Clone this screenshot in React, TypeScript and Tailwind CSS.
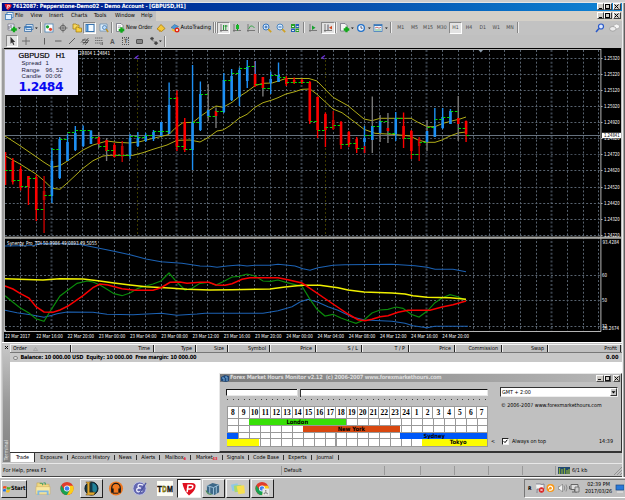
import type { ReactNode } from "react";
import { clsx } from "clsx";

type Kids = { children?: ReactNode };

/* ---------- chart data (chart pixels) ---------- */

type Candle = {
  c: "b" | "r" | "d";
  hi: number;
  lo: number;
  top: number;
  bot: number;
  tick: number;
  grey?: boolean;
};

const k = (c: "b" | "r" | "d", hi: number, lo: number, top: number, bot: number, tick: number, grey = false): Candle => ({
  c, hi, lo, top, bot, tick, grey,
});

const CANDLES: Candle[] = [
  k("r", 152, 185, 152, 185, 170.5),
  k("r", 158, 184.5, 161, 182, 180.5),
  k("r", 166, 190.5, 169, 188, 186.5),
  k("r", 176, 205, 176, 187, 178.5),
  k("r", 175, 221, 177, 210, 209.5),
  k("d", 176, 233, 191, 200, 195.5),
  k("b", 148, 203, 161, 196, 149.5),
  k("b", 137, 179, 139, 178, 139.5),
  k("b", 134, 161, 142, 161, 132.5),
  k("b", 126, 151, 133, 150, 130.5),
  k("b", 125.5, 147, 131, 146, 130.5),
  k("b", 130.5, 144, 130.5, 144, 137.5),
  k("r", 132, 148, 137, 144, 146.5, true),
  k("r", 138, 161, 140, 151, 150.5, true),
  k("r", 143, 157.5, 145, 157, 155.5),
  k("d", 141, 162, 146, 157, 155.5),
  k("b", 134, 159, 138, 155, 136.5),
  k("b", 132, 147, 138, 146, 137.5),
  k("b", 133, 142, 136, 141, 135.5),
  k("b", 130, 141, 132, 139, 131.5),
  k("b", 122, 136, 122, 136, 131.5),
  k("b", 82.5, 134, 105, 134, 98.5),
  k("r", 90.5, 151, 97, 147, 146.5),
  k("r", 118, 152, 122, 150, 149.5),
  k("b", 65, 170, 122, 150, 122.5),
  k("b", 81.5, 131, 94, 130, 94.5),
  k("b", 84, 121, 110, 116, 116.5, true),
  k("r", 107.5, 128, 111, 116, 111.5, true),
  k("b", 73, 113, 80, 112, 80.5),
  k("b", 69, 101, 76, 100, 73.5),
  k("b", 67.5, 106, 70, 97, 68.5),
  k("b", 60, 88, 67, 81, 66.5),
  k("r", 61, 87, 74, 86, 84.5),
  k("r", 77, 96.5, 77, 88, 88.5, true),
  k("b", 71.5, 94, 79, 83, 75.5),
  k("b", 62.5, 82, 75, 82, 77.5),
  k("r", 76, 86, 78, 84, 82.5),
  k("r", 77.5, 84, 80, 83, 82.5),
  k("r", 79, 84, 80, 83, 82.5),
  k("r", 81, 124, 82, 121, 121.5),
  k("r", 96.5, 138, 97, 130, 130.5),
  k("r", 112.5, 147, 114, 130, 127.5),
  k("d", 111, 130, 120, 129, 125.5),
  k("r", 121, 149, 122, 145, 144.5),
  k("r", 131, 147, 132, 145, 143.5),
  k("r", 137, 153, 139, 149, 148.5),
  k("b", 126, 153, 138, 142, 135.5),
  k("b", 96.5, 153, 126, 140, 126.5, true),
  k("b", 115, 142, 121, 133, 121.5, true),
  k("r", 113, 143, 128, 131, 133.5, true),
  k("b", 112, 141, 118, 134, 118.5),
  k("r", 112.5, 148, 126, 139, 138.5),
  k("r", 130, 159, 131, 151, 154.5),
  k("d", 137, 161, 139, 146, 142.5),
  k("b", 120, 151, 131, 142, 127.5, true),
  k("b", 108, 137, 126, 137, 119.5),
  k("b", 108, 129, 117, 128, 117.5),
  k("b", 109, 124, 111, 124, 111.5),
  k("r", 96, 141, 118, 124, 128.5, true),
  k("r", 120.5, 142, 121, 134, 135.5),
];

const BODY = { b: "#1e90f4", r: "#fc0000", d: "#c40000" };

const UPPER_BAND =
  "5,136 20,145.7 36,156.7 44,162.3 52,167.3 60,165.7 68,160.7 83,150 93,145 107,141 117,142.3 130,143 140,141.7 153,138.3 163,136 169,134.5 175,128.3 183,122.7 193,122.3 200,116.7 208,111 216,106 223,107.3 232,102.3 239,96.7 247,91.7 255,85.7 263,83.3 272,83 286,78.5 309,78.5 317,81 333,97.3 348,105.7 364,119 372,120.7 380,118.3 411,118.3 418,122.3 427,126.7 435,126.7 443,123.3 453,120.7 460,119 466,117";
const LOWER_BAND =
  "5,155.7 20,164 36,174 44,180.7 52,188.3 60,189.3 68,182.3 83,168.3 93,160.7 103,156 110,155.3 133,155.3 143,152.7 153,149.3 167,145 177,140.3 190,140 200,142 208,137.7 217,131 223,130 230,125.7 239,118.3 247,114.3 255,107.3 263,102.7 272,100 278,97.7 286,94 295,91.7 302,89.3 310,89 317,94.3 333,109 342,112.7 355,122.3 364,129.3 375,133.3 392,134.3 410,136 418,140 427,142.3 435,142.3 442,140 450,136 458,133 466,132";

const TDI_TOP =
  "5,246 34,245.5 40,243.5 76,244 83,245 98,248 114,251.3 130,254.7 146,259 161,261.7 182,263.3 200,266 210,266.3 217,267.3 227,266 239,265 247,266 255,265.3 270,265.3 278,264.3 288,265.3 295,266 303,268.7 310,270.3 318,267.7 333,265.3 345,264.7 392,264.3 415,265.7 427,267.3 435,269.3 453,269.3 466,271.7";
const TDI_LOW =
  "5,310.3 17,312.7 32,315 44,317.3 52,315.3 57,313.7 67,312 93,312.3 107,314.3 133,314.7 161,313.3 177,315.3 197,314 205,313.3 263,313.3 278,310.7 292,306.7 300,302 308,299.3 318,302.3 328,306.7 338,310.3 352,317 365,320 392,321.3 405,323.3 413,325.7 427,327.7 435,326.3 468,326.3";
const TDI_YELLOW =
  "5,278.7 27,279.5 43,280 60,278.7 83,279 98,280.7 114,283 130,285 146,286.7 169,288 187,289.3 210,290 232,289.7 270,289 285,287 302,285.3 320,285.3 338,287.7 348,290 364,292 392,293 405,294 413,295.7 427,297.3 450,297.7 466,299.3";
const TDI_RED =
  "5,286 13,289 20,293.3 29,298 36,306.7 44,312 53,312.3 60,310 68,306 83,295.7 93,287.7 100,284 108,285 122,288.7 135,290.3 153,290.3 161,287.7 170,282.3 180,282 187,283.3 200,282.3 209,282.3 216,285 225,285.3 232,283.7 242,279.3 250,277.7 278,277.7 288,279.7 302,283 310,288.3 333,304 348,314 358,319.7 365,320.7 372,319.3 380,316.7 388,315.7 398,312.3 408,310.3 430,310.3 442,307 453,304.7 466,301";
const TDI_GREEN =
  "5,295.7 13,302.3 20,307.7 29,313 36,318.7 44,321.3 52,308.3 60,296 68,290 77,283.3 87,281 93,282 100,285 107,289.3 114,293.7 122,295.7 130,293 138,288.3 146,286 153,284 161,281 169,273 177,282.3 185,290 192,288.3 200,283.3 208,282.3 216,285 223,281.7 232,277 239,276.3 247,274 255,276 263,281 271,281.3 278,280 286,282.3 294,284.3 302,286.3 310,299.3 317,309.3 325,316 333,314.3 341,318 349,321 356,323.3 364,320 372,313 380,310 388,309.3 396,307 403,308.3 411,314.3 419,317 427,311.3 435,302.7 442,298 450,294.7 458,296.7 466,300.3";

const PRICES = ["1.25320", "1.25220", "1.25120", "1.25020", "1.24920", "1.24820", "1.24720", "1.24620", "1.24520", "1.24420", "1.24320", "1.24220"];
const DATES = [
  "22 Mar 2017", "22 Mar 16:00", "22 Mar 20:00", "23 Mar 00:00", "23 Mar 04:00", "23 Mar 08:00", "23 Mar 12:00", "23 Mar 16:00",
  "23 Mar 20:00", "24 Mar 00:00", "24 Mar 04:00", "24 Mar 08:00", "24 Mar 12:00", "24 Mar 16:00", "24 Mar 20:00",
];

const colX = (i: number) => Math.floor(20.4 + i * 15.63) + 0.5;
const rowY = (i: number) => Math.floor(58.3 + i * 16.09) + 0.5;
const barX = (i: number) => 5 + i * 7.815;

function Chart() {
  return (
    <svg width="617" height="294" viewBox="4 48 617 294" className="block bg-black" fontFamily="'DejaVu Sans Condensed', 'DejaVu Sans', sans-serif">
      {/* grid */}
      {Array.from({ length: 38 }, (_, i) => {
        const thick = i % 8 === 2;
        return (
          <line key={i} x1={colX(i)} x2={colX(i)} y1="50" y2="331" stroke={thick ? "#39414b" : "#58636f"} strokeWidth={thick ? 2 : 1} strokeDasharray="2 1.9" />
        );
      })}
      {PRICES.map((p, i) => (
        <line key={p} x1="5" x2="600" y1={rowY(i)} y2={rowY(i)} stroke={i === 5 || i === 6 ? "#444d58" : "#58636f"} strokeDasharray="2 1.9" />
      ))}
      {[275.5, 300.5, 326.5].map((y) => (
        <line key={y} x1="5" x2="600" y1={y} y2={y} stroke="#58636f" strokeDasharray="2 1.9" />
      ))}
      {[137.5, 325.5].map((x) => (
        <line key={x} x1={x} x2={x} y1="60" y2="236" stroke="#3d3a00" strokeDasharray="2 2" />
      ))}
      <line x1="5" x2="600" y1="135.5" y2="135.5" stroke="#66727f" />

      {/* main window */}
      <polyline points={UPPER_BAND} fill="none" stroke="#b0ac18" />
      <polyline points={LOWER_BAND} fill="none" stroke="#b0ac18" />
      {CANDLES.map((b, i) => {
        const x = barX(i);
        return (
          <g key={i}>
            <line x1={x} x2={x} y1={b.hi} y2={b.lo} stroke={b.grey ? "#777" : BODY[b.c]} strokeWidth="1.4" />
            <line x1={x} x2={x} y1={b.top} y2={b.bot} stroke={BODY[b.c]} strokeWidth="2.6" />
          </g>
        );
      })}
      <rect x="254.6" y="61" width="1.2" height="13" fill="#1e8fee" />
      <rect x="363.8" y="146" width="1.6" height="7" fill="#f80000" />
      {CANDLES.map((b, i) => (
        <path key={i} d={`M${barX(i) + 0.3} ${b.tick}h2.4M${barX(i) + 4.4} ${b.tick}h${i === 59 ? 0 : 2.6}`} stroke="#00d800" strokeWidth="1.1" />
      ))}
      <path d="M138.5 55.5l-3 2 2.5 1.5M325 55.5l-3 2 2.5 1.5" fill="none" stroke="#6a30d8" strokeWidth="1.1" />
      <path d="M478.500 50h4.500l-2.200 2.500z" fill="#8fa0b0" />

      {/* indicator window */}
      <polyline points={TDI_TOP} fill="none" stroke="#1c62b4" strokeWidth="1.1" />
      <polyline points={TDI_LOW} fill="none" stroke="#1c62b4" strokeWidth="1.1" />
      <polyline points={TDI_GREEN} fill="none" stroke="#0b8a0b" strokeWidth="1.2" />
      <polyline points={TDI_YELLOW} fill="none" stroke="#f0f000" strokeWidth="1.5" />
      <polyline points={TDI_RED} fill="none" stroke="#f80000" strokeWidth="1.5" />

      {/* frame and axes */}
      <rect x="4" y="236.600" width="617" height="2.200" fill="#a4a4a0" />
      <path d="M4 49.500H601M600.900 49V331.500M4.500 49V331.500M4 331.500H601" stroke="#b4b4b4" fill="none" />
      <g fontSize="5.400" fill="#fff">
        {PRICES.map((p, i) => (
          <g key={p}>
            <path d={`M601 ${rowY(i)}h1.500`} stroke="#b4b4b4" />
            <text x="604" y={rowY(i) + 1.900} textLength="15.700" lengthAdjust="spacingAndGlyphs">{p}</text>
          </g>
        ))}
        <text x="602.500" y="244" textLength="16.500" lengthAdjust="spacingAndGlyphs">93.4284</text>
        <text x="602" y="277.300" textLength="5" lengthAdjust="spacingAndGlyphs">60</text>
        <text x="602" y="302.300" textLength="5" lengthAdjust="spacingAndGlyphs">50</text>
        <text x="602" y="328" textLength="5" lengthAdjust="spacingAndGlyphs">32</text>
        <text x="602.500" y="330" textLength="16.500" lengthAdjust="spacingAndGlyphs">28.2674</text>
        {DATES.map((d, i) => (
          <text key={d} x={5 + i * 31.240} y="338" textLength={i === 0 ? 25 : 26.600} lengthAdjust="spacingAndGlyphs">{d}</text>
        ))}
        <text x="7" y="244.800" textLength="90" lengthAdjust="spacingAndGlyphs">Synergy_Pro_TDI 50.9986 49.0893 49.5055</text>
        <text x="78" y="55.300" textLength="32" lengthAdjust="spacingAndGlyphs">.24804 1.24841</text>
      </g>
      <path d="M4.500 328.500l2 3h-2z" fill="#c0c8d0" />
      <rect x="602" y="132.800" width="19" height="5.400" fill="#fff" />
      <text x="604" y="137.400" fontSize="5.400" fill="#000" textLength="15.700" lengthAdjust="spacingAndGlyphs">1.24841</text>
    </svg>
  );
}

function InfoPanel() {
  return (
    <div className="absolute left-[5px] top-[2px] h-[45px] w-[73px] bg-[#e6e6fc] font-['Liberation_Sans',sans-serif] text-[6px] leading-[6.7px] text-[#181838]">
      <div className="flex h-[10px] items-center gap-[6px] pl-[13.500px] pt-[2px] text-[7.400px] leading-none text-black [-webkit-text-stroke:0.2px_black]">
        <span>GBPUSD</span>
        <span>H1</span>
      </div>
      <div className="grid grid-cols-[24px_1fr] pl-[16.500px] tracking-[0.02em]">
        <span>Spread</span>
        <span>1</span>
        <span>Range</span>
        <span>96, 52</span>
        <span>Candle</span>
        <span>00:06</span>
      </div>
      <div className="mt-[1px] pl-[13.500px] font-['DejaVu_Sans',sans-serif] text-[12.300px] font-bold leading-[12px] tracking-[-0.04em] text-[#0808f0]">1.2484</div>
    </div>
  );
}

/* ---------- toolbar pieces ---------- */

function Icon({ w = 10, children }: Kids & { w?: number }) {
  return (
    <svg width={w} height="10" viewBox={`0 0 ${w} 10`} className="shrink-0" fill="none">
      {children}
    </svg>
  );
}

function Slot({ className, on, children }: Kids & { className: string; on?: boolean }) {
  return (
    <div
      className={clsx(
        "flex shrink-0 items-center justify-center",
        on && "h-[12px] border-b border-l border-r border-t border-b-white border-l-[#888] border-r-white border-t-[#888] bg-[#e2e2e2]",
        className
      )}
    >
      {children}
    </div>
  );
}

const Sep = ({ className }: { className?: string }) => (
  <div className={clsx("h-[11px] w-[2px] shrink-0 border-l border-r border-l-[#858585] border-r-[#ececec]", className)} />
);

const Plus = ({ x, y }: { x: number; y: number }) => (
  <path d={`M${x} ${y - 2.8}v5.600M${x - 2.8} ${y}h5.600`} stroke="#10a818" strokeWidth="2.300" />
);

const Drop = ({ x }: { x: number }) => <path d={`M${x} 4.500h2.800l-1.400 1.600z`} fill="#111" />;

const Axes = () => <path d="M2 1v8M1 7.500h8" stroke="#707070" strokeWidth="0.900" />;

const TIMEFRAMES = ["M1", "M5", "M15", "M30", "H1", "H4", "D1", "W1", "MN"];

function MainToolbar() {
  return (
    <div className="flex h-[14px] items-center bg-[#c2c2c2] pl-[4px] text-[6px]">
      <Slot className="w-[16px]">
        <Icon w={16}>
          <path d="M2 1h6v6h-6z" fill="#eef" stroke="#667" strokeWidth="0.600" />
          <path d="M3 6v-3M5 5v-3" stroke="#333" strokeWidth="0.700" />
          <Plus x={8} y={6.500} />
          <Drop x={12} />
        </Icon>
      </Slot>
      <Slot className="w-[17px]">
        <Icon w={16}>
          <path d="M3 1.500h7v5h-7zM1.500 3.500h7v5h-7z" fill="#d5e6f6" stroke="#3a70a8" strokeWidth="0.800" />
          <path d="M2 4.500h6" stroke="#3a80c8" strokeWidth="1" />
          <Drop x={12} />
        </Icon>
      </Slot>
      <Sep className="ml-[1px]" />
      <Slot className="w-[14px]">
        <Icon>
          <rect x="1" y="1" width="8" height="8" fill="#fff" stroke="#4a86b8" strokeWidth="0.800" />
          <circle cx="3.500" cy="3.800" r="1.600" fill="#18a030" />
          <circle cx="6.500" cy="6.300" r="1.600" fill="#e04830" />
        </Icon>
      </Slot>
      <Slot className="w-[14px]">
        <Icon>
          <circle cx="5" cy="5" r="2.700" stroke="#666" />
          <path d="M5 .5v9M.5 5h9" stroke="#666" strokeWidth="0.900" />
        </Icon>
      </Slot>
      <Slot className="w-[13px]">
        <Icon>
          <path d="M1 1h3l1 1h2v4h-6z" fill="#f6d860" stroke="#a07808" strokeWidth="0.700" />
          <path d="M4 4h2l1 1h2.500v4h-5.500z" fill="#f8d040" stroke="#a07808" strokeWidth="0.700" />
        </Icon>
      </Slot>
      <Slot on className="w-[13px]">
        <Icon>
          <rect x="1" y="1.500" width="8" height="7" fill="#f4faff" stroke="#3874b0" />
          <path d="M1.500 2h2v6h-2z" fill="#3c88d0" />
        </Icon>
      </Slot>
      <Slot className="w-[15px]">
        <Icon>
          <path d="M1 1h7v7h-7z" fill="#dcebf8" stroke="#5c86b0" strokeWidth="0.700" />
          <circle cx="5.500" cy="4.500" r="2" fill="#b8dcff" stroke="#4878a8" strokeWidth="0.800" />
          <path d="M7 6l2.200 3" stroke="#c09020" strokeWidth="1.300" />
        </Icon>
      </Slot>
      <Sep />
      <Slot className="ml-[2px] w-[10px]">
        <Icon>
          <path d="M1.500 .5h4.500l2 2v6h-6.500z" fill="#fff" stroke="#667" strokeWidth="0.700" />
          <path d="M3 3h3M3 4.500h3" stroke="#889" strokeWidth="0.600" />
          <Plus x={6.500} y={7} />
        </Icon>
      </Slot>
      <span className="ml-[1px] w-[27.500px] whitespace-nowrap text-[5.700px] leading-none tracking-[-0.020em]">New Order</span>
      <Slot className="w-[15px]">
        <Icon>
          <path d="M1 6l4-4.500 4 4-3.500 3z" fill="#f4c838" stroke="#a87808" strokeWidth="0.800" />
          <path d="M2.500 7l1 2 2-1" fill="#d09020" />
        </Icon>
      </Slot>
      <Slot className="w-[12px]">
        <Icon>
          <path d="M1 4.500l3.500-3 4 2-3.500 3z" fill="#4a98d8" stroke="#28608c" strokeWidth="0.500" />
          <path d="M2 5.500l3 1.500 3-2v2.500l-3 1.500-3-1.500z" fill="#f0c030" />
          <circle cx="7" cy="7" r="2.500" fill="#e02818" />
          <rect x="6.100" y="6.100" width="1.800" height="1.800" fill="#fff" />
        </Icon>
      </Slot>
      <span className="w-[31.500px] whitespace-nowrap text-[5.700px] leading-none">AutoTrading</span>
      <Sep className="ml-[1px]" />
      <Sep />
      <Slot on className="w-[13px]">
        <Icon>
          <Axes />
          <path d="M4.500 2v5M6.800 2v5M5.500 3h3" stroke="#109020" strokeWidth="0.900" />
        </Icon>
      </Slot>
      <Slot className="w-[14px]">
        <Icon>
          <Axes />
          <path d="M5.500 1v6.500" stroke="#109020" />
          <rect x="4" y="2" width="3" height="4" fill="#18b828" />
        </Icon>
      </Slot>
      <Slot className="w-[14px]">
        <Icon>
          <Axes />
          <path d="M2.500 6l2-3 2 0 2 2" stroke="#30a040" strokeWidth="0.900" />
        </Icon>
      </Slot>
      <Sep />
      <Slot className="w-[14px]">
        <Icon>
          <circle cx="4" cy="4" r="3" fill="#d8ecff" stroke="#3878c0" />
          <path d="M4 2.500v3M2.500 4h3" stroke="#1858a8" strokeWidth="0.900" />
          <path d="M6.200 6.200l3 3" stroke="#d0a020" strokeWidth="1.700" />
        </Icon>
      </Slot>
      <Slot className="w-[14px]">
        <Icon>
          <circle cx="4" cy="4" r="3" fill="#d8ecff" stroke="#5088c0" />
          <path d="M2.500 4h3" stroke="#1858a8" strokeWidth="0.900" />
          <path d="M6.200 6.200l3 3" stroke="#d0a020" strokeWidth="1.700" />
        </Icon>
      </Slot>
      <Slot className="w-[13px]">
        <Icon>
          <path d="M1 1h4v4h-4zM5.500 5.500h3.500v3.500h-3.500z" fill="#28a028" />
          <path d="M5.500 1h3.500v4h-3.500zM1 5.500h4v3.500h-4z" fill="#2860b8" />
          <path d="M2 3.500h2M6.500 3.500h2M2 7.500h2M6.500 7.500h2" stroke="#e8f4e8" strokeWidth="1.200" />
        </Icon>
      </Slot>
      <Sep className="ml-[2px]" />
      <Slot className="ml-[1px] w-[14px]">
        <Icon>
          <Axes />
          <path d="M4 2.500l3.500 2.200-3.500 2.200z" fill="#18a030" />
        </Icon>
      </Slot>
      <Slot on className="ml-[1px] w-[14px]">
        <Icon>
          <Axes />
          <path d="M5 1.500v5.500" stroke="#556" />
          <path d="M9 2.800l-3 1.900 3 1.900z" fill="#d04820" />
        </Icon>
      </Slot>
      <Sep />
      <Slot className="ml-[1px] w-[17px]">
        <Icon w={16}>
          <path d="M1.500 .5h4.500l2 2v5.500h-6.500z" fill="#f4f4f4" stroke="#667" strokeWidth="0.700" />
          <Plus x={7.500} y={6.500} />
          <Drop x={12} />
        </Icon>
      </Slot>
      <Slot className="w-[17px]">
        <Icon w={16}>
          <circle cx="5" cy="5" r="4" fill="#2070c8" />
          <circle cx="5" cy="5" r="2.700" fill="#eef6ff" />
          <path d="M5 3v2.200h1.600" stroke="#224" strokeWidth="0.700" />
          <Drop x={12} />
        </Icon>
      </Slot>
      <Slot className="w-[17px]">
        <Icon w={16}>
          <rect x="1" y="1.500" width="8" height="7" fill="#eef6ff" stroke="#3a78b8" strokeWidth="0.800" />
          <path d="M1 2.300h8" stroke="#3a78b8" strokeWidth="1.400" />
          <path d="M2 5l2-.8 2 1 2-1" stroke="#c04030" strokeWidth="0.700" />
          <path d="M2 7h6" stroke="#30a040" strokeWidth="0.700" />
          <Drop x={12} />
        </Icon>
      </Slot>
      <Sep className="ml-[1px]" />
      <div className="ml-[2px] flex text-[5.200px] text-[#484848]">
        {TIMEFRAMES.map((t) => (
          <Slot key={t} on={t === "H1"} className="w-[13.650px]">
            {t}
          </Slot>
        ))}
      </div>
      <Sep />
      <div className="ml-auto flex items-center gap-[4px] pr-[2px]">
        <Icon>
          <circle cx="6" cy="3.500" r="2.500" stroke="#2858c8" fill="#dde8ff" strokeWidth="1.200" />
          <path d="M4 5.500l-3 3.500" stroke="#2858c8" strokeWidth="1.500" />
        </Icon>
        <Icon w={11}>
          <ellipse cx="7.500" cy="3.500" rx="3" ry="2.400" fill="#f6f6f6" stroke="#999" strokeWidth="0.600" />
          <ellipse cx="3.800" cy="5.800" rx="3.200" ry="2.300" fill="#ececec" stroke="#888" strokeWidth="0.600" />
        </Icon>
      </div>
    </div>
  );
}

function DrawToolbar() {
  return (
    <div className="flex h-[13px] items-center bg-[#c0c0c0] pl-[4px] text-[#555]">
      <Slot on className="w-[12px]">
        <Icon>
          <path d="M3.500 .8v7l1.600-1.500 1.200 2.700 1-.5-1.100-2.500h2z" fill="#333" />
        </Icon>
      </Slot>
      <Slot className="w-[15px]">
        <Icon>
          <path d="M5 1v8M1 5h8" stroke="#666" strokeWidth="0.900" />
        </Icon>
      </Slot>
      <Slot className="ml-[4.500px] w-[13.700px]">
        <Icon>
          <path d="M5.500 2v6.500" stroke="#555" strokeWidth="0.900" />
        </Icon>
      </Slot>
      <Slot className="w-[13.700px]">
        <Icon>
          <path d="M2 5h6.500" stroke="#555" strokeWidth="0.900" />
        </Icon>
      </Slot>
      <Slot className="w-[13.700px]">
        <Icon>
          <path d="M2 8l6-6" stroke="#555" strokeWidth="0.900" />
        </Icon>
      </Slot>
      <Slot className="w-[13.700px]">
        <Icon>
          <path d="M1 6.500l4-4M3 8.500l5.500-6.500M5 9l4-5M2 4h6M2.500 6.500h5.500" stroke="#444" strokeWidth="0.800" />
        </Icon>
      </Slot>
      <Slot className="w-[13.700px]">
        <Icon>
          <path d="M1 2h7.500M1 4.500h7.500M1 7h5" stroke="#666" strokeWidth="0.900" strokeDasharray="1.500 0.500" />
          <path d="M7 6v3M8.500 6v3" stroke="#555" strokeWidth="0.700" />
        </Icon>
      </Slot>
      <Slot className="w-[13px] font-['Liberation_Sans'] text-[6.500px] font-bold">A</Slot>
      <Slot className="w-[14px]">
        <span className="flex h-[8px] w-[7px] items-center justify-center border border-dotted border-[#555] text-[6px] font-bold leading-none">T</span>
      </Slot>
      <Slot className="w-[13px]">
        <span className="h-[5px] w-[7px] rounded-[1px] border border-[#555] bg-[#888]" />
      </Slot>
      <Slot className="ml-[2px] w-[16px]">
        <Icon w={14}>
          <path d="M1 2.500l2-1.500 2 1.500-2 1.800zM5 7.200l2-2 2 2-2 1.800zM3 4.500l3 1" fill="#444" stroke="#555" strokeWidth="0.500" />
          <Drop x={10} />
        </Icon>
      </Slot>
      <Sep />
    </div>
  );
}

function WinButtons({ active = true }: { active?: boolean }) {
  const cls = "flex h-[7px] w-[7.500px] items-center justify-center border border-b-[#404040] border-l-white border-r-[#404040] border-t-white bg-[#cfccc6]";
  return (
    <div className={clsx("flex", !active && "opacity-90")}>
      <span className={cls}>
        <span className="mt-[3px] h-px w-[3px] bg-black" />
      </span>
      <span className={cls}>
        <span className="h-[5px] w-[5px] border border-black" />
      </span>
      <span className={clsx(cls, "ml-[1.500px]")}>
        <svg width="5" height="5" viewBox="0 0 5 5">
          <path d="M.5 .5l4 4M4.500 .5l-4 4" stroke="#000" />
        </svg>
      </span>
    </div>
  );
}

/* ---------- terminal ---------- */

const HEADERS = [
  { label: "Order", cls: "w-[61px]", left: true },
  { label: "Time", cls: "w-[82.500px]" },
  { label: "Type", cls: "w-[42px]" },
  { label: "Size", cls: "w-[32px]" },
  { label: "Symbol", cls: "w-[42px]" },
  { label: "Price", cls: "w-[46px]" },
  { label: "S / L", cls: "w-[46px]" },
  { label: "T / P", cls: "w-[47px]" },
  { label: "Price", cls: "w-[46px]" },
  { label: "Commission", cls: "w-[47px]" },
  { label: "Swap", cls: "w-[46px]" },
  { label: "Profit", cls: "w-[73px]" },
];

const TABS = [
  { label: "Exposure", cls: "w-[32px]" },
  { label: "Account History", cls: "w-[46.500px]" },
  { label: "News", cls: "w-[22.700px]" },
  { label: "Alerts", cls: "w-[23.300px]" },
  { label: "Mailbox", cls: "w-[31px]", badge: "6" },
  { label: "Market", cls: "w-[31.500px]", badge: "43" },
  { label: "Signals", cls: "w-[26px]" },
  { label: "Code Base", cls: "w-[35px]" },
  { label: "Experts", cls: "w-[28px]" },
  { label: "Journal", cls: "w-[27px]" },
];

const HOURS = [8, 9, 10, 11, 12, 13, 14, 15, 16, 17, 18, 19, 20, 21, 22, 23, 24, 1, 2, 3, 4, 5, 6, 7];

const hourCols = "grid grid-cols-[repeat(24,minmax(0,1fr))]";

function HourRow({ children }: Kids) {
  return (
    <div className={clsx(hourCols, "h-[6.800px] bg-[repeating-linear-gradient(to_right,#999_0,#999_1px,#fff_1px,#fff_10.850px)] text-center text-[5.800px] font-bold leading-[6px]")}>
      {children}
    </div>
  );
}

function HoursMonitor() {
  return (
    <div className="absolute left-[216px] top-[28.500px] h-[79.500px] w-[403px] border border-b-[#333] border-l-[#e8e8e8] border-r-[#333] border-t-[#e8e8e8] bg-[#c0c0c0]">
      <div className="flex h-[8.500px] items-center bg-linear-to-r from-[#7c7c7c] to-[#b8b8b8] pl-[1px] pr-[1px]">
        <svg width="8" height="8" viewBox="0 0 8 8">
          <path d="M0 3l4-2 4 1v5l-3 1-5-1z" fill="#204878" />
          <path d="M1 4h2v3M4 3h2v4" stroke="#78b0e0" fill="none" />
        </svg>
        <span className="ml-[1px] flex-1 whitespace-pre text-[5.700px] font-bold leading-none tracking-[-0.035em] text-[#dcdcdc]">
          {"Forex Market Hours Monitor v2.12  (c) 2006-2007 www.forexmarkethours.com"}
        </span>
        <WinButtons active={false} />
      </div>
      <div className="flex pl-[6px] pr-[3px]">
        <div className="w-[262px] pt-[6.500px]">
          <div className="flex h-[7px] border border-b-[#e8e8e8] border-l-[#111] border-r-[#e8e8e8] border-t-[#111] bg-white">
            <div className="ml-[70px] h-[8px] w-[4px] -translate-y-px border-l border-r border-l-[#ddd] border-r-[#333] bg-[#c0c0c0]" />
          </div>
          <div className="ml-[1px] mt-[3px] h-[1.500px] bg-[repeating-linear-gradient(to_right,#444_0,#444_1px,transparent_1px,transparent_5.600px)]" />
          <div className="ml-[1px] mt-[6px] w-[260.500px] border-b border-r border-[#999]">
            <div className={clsx(hourCols, "h-[11.500px] border-t border-[#999] bg-white text-center font-['Liberation_Serif',serif] text-[7.500px] font-bold leading-[11px]")}>
              {HOURS.map((h) => (
                <span key={h} className="border-l border-[#999]">{h}</span>
              ))}
            </div>
            <div className="divide-y divide-[#999] border-t border-[#999]">
              <HourRow>
                <span className="col-span-9 col-start-3 bg-[#38e008]">London</span>
              </HourRow>
              <HourRow>
                <span className="col-span-9 col-start-8 bg-[#d84810]">New York</span>
              </HourRow>
              <HourRow>
                <span className="col-span-1 bg-[#0058f8]" />
                <span className="col-span-8 col-start-17 bg-[#0058f8] pr-[18px]">Sydney</span>
              </HourRow>
              <HourRow>
                <span className="col-span-3 bg-[#fcfc00]" />
                <span className="col-span-6 col-start-19 bg-[#fcfc00] pl-[8px]">Tokyo</span>
              </HourRow>
            </div>
          </div>
        </div>
        <div className="flex flex-1 flex-col pl-[3px] pt-[5px] text-[5.600px] leading-none">
          <div className="ml-[9px] flex h-[10px] items-center justify-between border border-b-[#eee] border-l-[#333] border-r-[#eee] border-t-[#333] bg-white pl-[1px]">
            <span className="text-[5.400px]">GMT + 2:00</span>
            <span className="flex h-[8px] w-[7px] items-center justify-center border border-b-[#333] border-l-white border-r-[#333] border-t-white bg-[#c8c8c8]">
              <svg width="5" height="3" viewBox="0 0 5 3"><path d="M.5 .3h4l-2 2.300z" /></svg>
            </span>
          </div>
          <span className="ml-[10px] mt-[6px] whitespace-nowrap text-[5.300px]">© 2006-2007 www.forexmarkethours.com</span>
          <div className="mt-[29px] flex items-center whitespace-nowrap text-[5.400px]">
            <span className="w-[11px]">&lt;</span>
            <span className="mr-[3px] flex size-[7px] items-center justify-center border border-b-[#eee] border-l-[#222] border-r-[#eee] border-t-[#222] bg-white">
              <svg width="5" height="5" viewBox="0 0 5 5"><path d="M.7 2.200l1.300 1.400 2.300-2.800" fill="none" stroke="#000" /></svg>
            </span>
            <span className="flex-1">Always on top</span>
            <span className="pr-[5px]">14:39</span>
          </div>
        </div>
      </div>
    </div>
  );
}

function Terminal() {
  return (
    <div className="relative flex h-[118px] bg-[#c0c0c0]">
      <div className="flex w-[7px] flex-col items-center justify-between bg-linear-to-b from-[#c8c8c8] via-[#9a9a9a] to-[#808080]">
        <svg width="5" height="5" viewBox="0 0 5 5" className="mt-[1px]"><path d="M1 1l3 3M4 1l-3 3" stroke="#111" /></svg>
        <span className="mb-[2px] text-[5.400px] leading-none text-[#e4e4e4] [writing-mode:vertical-rl] rotate-180">Terminal</span>
      </div>
      <div className="flex min-w-0 flex-1 flex-col text-[5.400px] leading-none">
        <div className="flex h-[9px] border-b border-t border-b-[#777] border-t-[#f4f4f4]">
          {HEADERS.map((h, i) => (
            <div key={i} className={clsx("flex shrink-0 items-center whitespace-nowrap border-l border-r border-l-[#eee] border-r-[#222]", h.cls, h.left ? "pl-[2px]" : "justify-end pr-[2.500px]")}>
              {h.label}
              {h.left && <svg width="5" height="4" viewBox="0 0 5 4" className="ml-[6px]"><path d="M.5 3.500l2-3 2 3z" fill="none" stroke="#999" strokeWidth="0.600" /></svg>}
            </div>
          ))}
        </div>
        <div className="flex h-[9px] items-center bg-[#c8c8c8] pl-[3px] pr-[3px] font-bold">
          <span className="mr-[3px] size-[4.500px] rounded-full border border-[#888] bg-[#ddd]" />
          <span className="flex-1 whitespace-pre text-[5.600px] tracking-[-0.042em]">{"Balance: 10 000.00 USD  Equity: 10 000.00  Free margin: 10 000.00"}</span>
          <span className="text-[5.600px]">0.00</span>
        </div>
        <div className="h-[90px] bg-white" />
        <div className="flex h-[9px] items-center border-t border-[#333]">
          <span className="ml-[1px] mr-[1px] flex h-[9px] w-[24px] shrink-0 items-center justify-center border-r border-[#333] bg-white">Trade</span>
          {TABS.map((t) => (
            <span key={t.label} className={clsx("relative flex h-[5px] shrink-0 items-center justify-center whitespace-nowrap border-r border-[#333]", t.cls)}>
              {t.label}
              {t.badge && <span className="mt-[3px] text-[4px] font-bold text-[#e81828]">{t.badge}</span>}
            </span>
          ))}
        </div>
      </div>
      <HoursMonitor />
    </div>
  );
}

/* ---------- taskbar ---------- */

function TaskIcon({ children, raised, white }: Kids & { raised?: boolean; white?: boolean }) {
  return (
    <div
      className={clsx(
        "flex h-[19px] w-[23.400px] shrink-0 items-center justify-center border",
        raised ? "border-b-[#222] border-l-[#f4f4f4] border-r-[#222] border-t-[#f4f4f4] bg-[#c8c8c8]" : !white && "border-transparent",
        white && "border-b-[#eee] border-l-[#222] border-r-[#eee] border-t-[#222] bg-white"
      )}
    >
      <svg width="16" height="15" viewBox="0 0 17 16" fill="none">
        {children}
      </svg>
    </div>
  );
}

const Chrome = () => (
  <>
    <circle cx="8.500" cy="8" r="7" fill="#e03c2c" />
    <path d="M2.440 4.500A7 7 0 0 0 8.500 15l3-5.200-5.600-.2z" fill="#18a050" />
    <path d="M8.500 15A7 7 0 0 0 14.900 5H8.500l3 4.800z" fill="#fcd018" />
    <circle cx="8.500" cy="8" r="3.200" fill="#fff" />
    <circle cx="8.500" cy="8" r="2.500" fill="#4080f0" />
  </>
);

function Taskbar() {
  return (
    <div className="flex h-[23px] border-t-[1.500px] border-white bg-[#c0c0c0]">
      <div className="ml-[1px] mt-[2px] flex h-[18px] w-[26px] items-center border border-b-[#222] border-l-white border-r-[#222] border-t-white pl-[1px]">
        <svg width="8" height="8" viewBox="0 0 8 8">
          <path d="M0 1.500q2-1.200 3.700 0l-.6 2.300q-1.600-1-3.400 0z" fill="#f05020" />
          <path d="M4.200 1.700q1.800 1 3.600 0l-.7 2.400q-1.700 1-3.500 0z" fill="#50b020" />
          <path d="M-.2 4.500q1.800-1 3.300 0l-.6 2.300q-1.500-1-3.100 0z" fill="#2070e0" />
          <path d="M3.600 4.700q1.700 1 3.400 0l-.7 2.400q-1.600 1-3.300 0z" fill="#f8c010" />
        </svg>
        <span className="text-[5.800px] font-bold leading-none tracking-[-0.020em]">Start</span>
      </div>
      <div className="ml-[4px] mt-px flex gap-[1px]">
        <TaskIcon>
          <path d="M2 2h5l1 1.500h7v9h-13z" fill="#f0d880" stroke="#c8a850" strokeWidth="0.600" />
          <path d="M5 2.500h3v2M9 2h2v2" stroke="#40a060" />
          <path d="M1 6h15v8h-15z" fill="#f8e8a0" stroke="#d0b060" strokeWidth="0.600" />
          <path d="M3.500 15v-4h10v4" stroke="#80b8e0" strokeWidth="2" />
        </TaskIcon>
        <TaskIcon><Chrome /></TaskIcon>
        <TaskIcon raised>
          <circle cx="9" cy="8" r="7" fill="#103848" stroke="#081820" />
          <path d="M10 2a6 6 0 0 1 2 11l-2-3z" fill="#208098" />
          <path d="M3 1h5l-1 1.500v9.500h6l-1.500 3h-8.500l1.500-2v-10z" fill="#e0a830" stroke="#604010" strokeWidth="0.500" />
        </TaskIcon>
        <TaskIcon>
          <circle cx="8.500" cy="8" r="7.500" fill="#f07820" />
          <path d="M4 9v-2a4.500 4.500 0 0 1 9 0v2" stroke="#181818" strokeWidth="1.300" />
          <path d="M3.300 8h2.700v4.500h-2.700zM11 8h2.700v4.500h-2.700z" fill="#181818" />
          <path d="M5 13h6" stroke="#181818" />
        </TaskIcon>
        <TaskIcon>
          <circle cx="8" cy="8" r="7" fill="#6468b0" stroke="#c0c4e8" />
          <path d="M12 4.500q-5-2-5.500.5t3 2.500q-5-.5-4.500 2.500t6 .5" stroke="#f0f0ff" strokeWidth="1.400" />
          <path d="M8 13l7-11" stroke="#4850a0" strokeWidth="1.200" />
        </TaskIcon>
        <TaskIcon>
          <rect width="17" height="16" fill="#fcfcf4" />
          <g fontSize="9.500" fontWeight="bold" fontFamily="Liberation Sans" fill="#111" stroke="#111" strokeWidth="0.400">
            <text x="0.300" y="11.500" textLength="5" lengthAdjust="spacingAndGlyphs">T</text>
            <text x="5.500" y="11.500" textLength="4.800" lengthAdjust="spacingAndGlyphs" fill="#d8c800">D</text>
            <text x="10.500" y="11.500" textLength="6.300" lengthAdjust="spacingAndGlyphs">M</text>
          </g>
        </TaskIcon>
        <TaskIcon white>
          <path d="M1.500 2h10q4.500 0 4 4-.5 4.500-7 9.500-6-6-7-13.500z" fill="#e01020" />
          <path d="M6.500 12l1-7.500h3q2.500 0 2 2t-3 2h-3.500" stroke="#fff" strokeWidth="1.700" />
        </TaskIcon>
        <TaskIcon raised>
          <path d="M2 5l6-3 7 2v8l-5 3-8-3z" fill="#3c6888" />
          <path d="M2 5l7 2 6-3M9 7v8M5 6v7M12 5.500v8" stroke="#a0c4dc" />
          <path d="M1 10q2 5 6 4" stroke="#408850" strokeWidth="1.200" />
        </TaskIcon>
        <TaskIcon raised>
          <path d="M1 4l7-1.500 1.500 7-7 1.500z" fill="#90c8e8" />
          <path d="M4 5l8-1 1 7-8 1z" fill="#a8d870" />
          <path d="M7 5.500l8-1 1 8.500-7 1z" fill="#f8e050" />
        </TaskIcon>
        <TaskIcon raised>
          <Chrome />
          <rect x="9" y="8" width="7" height="7.500" fill="#e8e8e8" />
          <path d="M12.500 9.500v2M10.500 14q2-3 4 0" stroke="#888" strokeWidth="1.300" />
        </TaskIcon>
      </div>
      <div className="ml-auto mt-px flex h-[19px] w-[101px] items-center border-b border-l border-t border-b-white border-l-[#777] border-t-[#777] pl-[3px] text-[5.400px] leading-none">
        <span className="w-[7px] text-[5px] font-bold">R</span>
        <svg width="47" height="12" viewBox="0 0 47 12" fill="none">
          <path d="M1 2h4q2 1 4 0v5q-2 1-4 0h-3v4" fill="#f4f4f4" stroke="#667" strokeWidth="0.700" />
          <circle cx="6.500" cy="8" r="2.700" fill="#d82020" />
          <path d="M5.300 6.800l2.400 2.400M7.700 6.800l-2.400 2.400" stroke="#fff" strokeWidth="0.800" />
          <circle cx="15.500" cy="6" r="4" fill="#f89818" />
          <path d="M13.500 6.500a2 2 0 1 1 2 1.700h-1.500" stroke="#fff" strokeWidth="1.200" />
          <path d="M23.500 4.500h1.500l2.500-2.500v8l-2.500-2.500h-1.500z" fill="#f4f4f4" stroke="#777" strokeWidth="0.600" />
          <path d="M29 3.500q1.500 2.500 0 5M31 2.500q2 3.500 0 7" stroke="#777" strokeWidth="0.700" />
          <path d="M36 2.500h7v5h-7z" fill="#ddd" stroke="#666" />
          <path d="M37 10h5M39.500 7.500v2M34.500 4v3h2" stroke="#666" />
          <path d="M40 5h4v5h-4z" fill="#ccc" stroke="#666" strokeWidth="0.800" />
        </svg>
        <div className="ml-[1px] flex w-[31px] flex-col items-center gap-[2px] whitespace-nowrap">
          <span>02:39 PM</span>
          <span className="tracking-[-0.020em]">2017/03/26</span>
        </div>
        <svg width="9" height="9" viewBox="0 0 9 9" className="ml-[1px] shrink-0">
          <rect x="1" y="1" width="8" height="5" fill="#2878d8" stroke="#184888" strokeWidth="0.700" />
          <path d="M2 8h6" stroke="#eee" />
        </svg>
      </div>
    </div>
  );
}

export default function App() {
  return (
    <div className="h-[500px] w-[625px] overflow-hidden bg-[#c0c0c0] font-['DejaVu_Sans_Condensed','DejaVu_Sans',sans-serif] text-black">
      <div className="h-[2.700px] border-b border-[#e4e4e4] bg-[#cccccc]" />
      <div className="flex h-[474.300px]">
        <div className="w-[2px] border-r border-[#d4d4d4] bg-[#f2f2f2]" />
        <div className="flex min-w-0 flex-1 flex-col">
          <div className="flex h-[8.300px] items-center bg-linear-to-r from-[#000c88] via-[#0848a8] to-[#1084d4] pl-[1.500px] pr-[1px]">
            <svg width="8" height="8" viewBox="0 0 8 8">
              <path d="M.5 1h5q2.500 0 2 2-.5 2-3.500 4.500-3-3-3.500-6.500z" fill="#e81828" />
              <path d="M3 6l.6-3.700h1.400q1.200 0 .8 1t-1.600.9" fill="none" stroke="#fff" strokeWidth="0.800" />
            </svg>
            <span className="ml-[1px] flex-1 whitespace-nowrap text-[5.700px] font-bold leading-none tracking-[-0.030em] text-white">
              7612087: Pepperstone-Demo02 - Demo Account - [GBPUSD,H1]
            </span>
            <WinButtons />
          </div>
          <div className="flex h-[10px] items-center bg-[#d4d0c8] pr-[1px] text-[5.600px] leading-none">
            <div className="flex h-full w-[154px] items-center bg-[#c0c0c0] pl-[3px] pt-[0.500px]">
              <svg width="10" height="8" viewBox="0 0 10 8">
                <rect x="2" y=".5" width="6" height="5" fill="#fff" stroke="#3878b8" strokeWidth="0.800" />
                <rect x=".5" y="2.500" width="6" height="5" fill="#e0f0ff" stroke="#3878b8" strokeWidth="0.800" />
              </svg>
              <span className="w-[15.500px]">File</span>
              <span className="w-[18.500px]">View</span>
              <span className="w-[22px]">Insert</span>
              <span className="w-[23px]">Charts</span>
              <span className="w-[21px]">Tools</span>
              <span className="w-[26px]">Window</span>
              <span>Help</span>
            </div>
            <div className="ml-auto">
              <WinButtons />
            </div>
          </div>
          <MainToolbar />
          <DrawToolbar />
          <div className="relative h-[294px] border-l-2 border-[#9c9c9c]">
            <Chart />
            <div className="absolute -left-[4px] top-0">
              <InfoPanel />
            </div>
          </div>
          <div className="h-[2.500px] shrink-0 border-t border-white bg-[#c0c0c0]" />
          <div className="-mb-px ml-[1px]">
            <Terminal />
          </div>
          <div className="mt-[2px] flex flex-1 items-center border-b border-t border-b-[#444] border-t-[#e8e8e8] pl-[1px] pt-[1px] text-[5.400px] leading-none">
            <span className="w-[278px] whitespace-nowrap">For Help, press F1</span>
            <span className="flex h-[9px] w-[103px] items-center border-l border-[#999] pl-[2px]">Default</span>
            <span className="h-[9px] w-[36px] border-l border-[#999]" />
            <span className="h-[9px] w-[34px] border-l border-[#999]" />
            <span className="h-[9px] w-[34px] border-l border-[#999]" />
            <span className="h-[9px] w-[34px] border-l border-[#999]" />
            <span className="h-[9px] w-[33px] border-l border-[#999]" />
            <span className="flex h-[9px] flex-1 items-center gap-[2px] border-l border-[#999] pl-[2px]">
              <svg width="12" height="7" viewBox="0 0 12 7">
                <rect width="12" height="7" fill="#204870" />
                <path d="M1.500 7v-6M4 7v-5M6.500 7v-6M9 7v-4M11 7v-5" stroke="#88a838" strokeWidth="1.300" />
              </svg>
              6/1 kb
            </span>
            <svg width="8" height="8" viewBox="0 0 8 8"><path d="M0 8l8-8M3 8l5-5M6 8l2-2" stroke="#888" strokeWidth="0.800" /></svg>
          </div>
        </div>
        <div className="w-[3.500px] border-l border-r-[1.500px] border-l-[#eee] border-r-[#606060] bg-[#a8a8a8]" />
      </div>
      <Taskbar />
    </div>
  );
}
